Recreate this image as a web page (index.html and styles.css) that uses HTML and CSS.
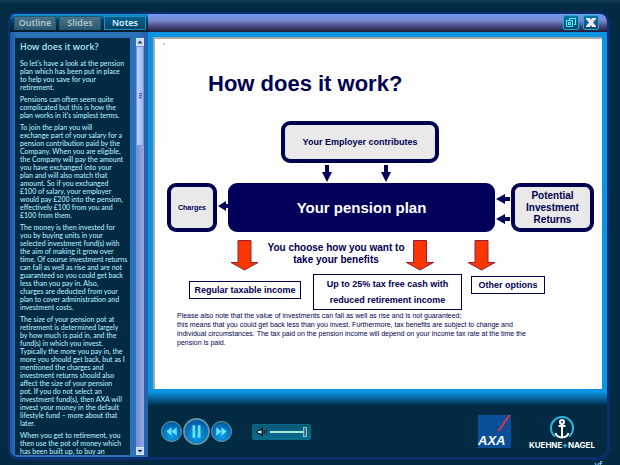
FILE: index.html
```html
<!DOCTYPE html>
<html lang="en">
<head>
<meta charset="utf-8">
<title>How does it work?</title>
<link rel="stylesheet" href="styles.css">
</head>
<body>
<main class="window">
  <header class="topbar">
    <nav class="tabs">
      <button class="tab" type="button">Outline</button>
      <button class="tab" type="button">Slides</button>
      <button class="tab tab-active" type="button">Notes</button>
    </nav>
    <div class="window-actions">
      <button class="action" type="button" aria-label="Restore window">
        <svg viewBox="0 0 14 13"><path d="M5.500 4v-1.500h6v6h-1.500M2.500 4.500h6v6h-6z"/><rect x="4.500" y="6.500" width="2" height="2"/></svg>
      </button>
      <button class="action" type="button" aria-label="Close">
        <svg viewBox="0 0 14 13"><path class="close-mark" d="M2 2h4l1 2 1-2h4v1L9 6.500l3 3.500v1H8L7 9l-1 2H2v-1l3-3.500L2 3z"/></svg>
      </button>
    </div>
  </header>
  <div class="workspace">
    <aside class="sidebar">
      <article class="notes">
        <h2>How does it work?</h2>
        <p>So let's have a look at the pension<br>plan which has been put in place<br>to help you save for your<br>retirement.</p>
        <p>Pensions can often seem quite<br>complicated but this is how the<br>plan works in it's simplest terms.</p>
        <p>To join the plan you will<br>exchange part of your salary for a<br>pension contribution paid by the<br>Company. When you are eligible,<br>the Company will pay the amount<br>you have exchanged into your<br>plan and will also match that<br>amount. So if you exchanged<br>£100 of salary, your employer<br>would pay £200 into the pension,<br>effectively £100 from you and<br>£100 from them.</p>
        <p>The money is then invested for<br>you by buying units in your<br>selected investment fund(s) with<br>the aim of making it grow over<br>time. Of course investment returns<br>can fall as well as rise and are not<br>guaranteed so you could get back<br>less than you pay in. Also,<br>charges are deducted from your<br>plan to cover administration and<br>investment costs.</p>
        <p>The size of your pension pot at<br>retirement is determined largely<br>by how much is paid in, and the<br>fund(s) in which you invest.<br>Typically the more you pay in, the<br>more you should get back, but as I<br>mentioned the charges and<br>investment returns should also<br>affect the size of your pension<br>pot. If you do not select an<br>investment fund(s), then AXA will<br>invest your money in the default<br>lifestyle fund – more about that<br>later.</p>
        <p>When you get to retirement, you<br>then use the pot of money which<br>has been built up, to buy an</p>
      </article>
      <div class="scrollbar">
        <button class="scroll-button" type="button" aria-label="Scroll up"><svg viewBox="0 0 8 8"><path d="M1 5.500l3-3 3 3z"/></svg></button>
        <div class="scroll-track"><div class="scroll-thumb"><span class="grip"></span></div></div>
        <button class="scroll-button" type="button" aria-label="Scroll down"><svg viewBox="0 0 8 8"><path d="M1 2.500l3 3 3-3z"/></svg></button>
      </div>
    </aside>
    <section class="stage">
      <div class="slide-frame">
        <div class="slide">
          <svg class="arrows" viewBox="0 0 446 240">
            <circle cx="9" cy="5" r="1" fill="#bbb"/>
            <g class="navy">
              <path d="M170 126h4v7h3l-5 10-5-10h3z"/>
              <path d="M229 126h4v7h3l-5 10-5-10h3z"/>
              <path d="M63 167l8-5v3h4v4h-4v3z"/>
              <path d="M341 160l9-5v3h5v4h-5v3z"/>
              <path d="M341 180l9-5v3h5v4h-5v3z"/>
            </g>
            <g class="red">
              <path d="M83 201.500h13v22h7l-13.500 7.500-13.500-7.500h7z"/>
              <path d="M258.500 201.500h13v22h7l-13.500 7.500-13.500-7.500h7z"/>
              <path d="M320 201.500h13v22h7l-13.500 7.500-13.500-7.500h7z"/>
            </g>
          </svg>
          <h1 class="slide-title">How does it work?</h1>
          <div class="node employer">Your Employer contributes</div>
          <div class="node charges">Charges</div>
          <div class="node plan">Your pension plan</div>
          <div class="node returns">Potential<br>Investment<br>Returns</div>
          <div class="choose">You choose how you want to<br>take your benefits</div>
          <div class="option regular">Regular taxable income</div>
          <div class="option cash">Up to 25% tax free cash with<br>reduced retirement income</div>
          <div class="option other">Other options</div>
          <p class="disclaimer">Please also note that the value of investments can fall as well as rise and is not guaranteed;<br>this means that you could get back less than you invest. Furthermore, tax benefits are subject to change and<br>individual circumstances. The tax paid on the pension income will depend on your income tax rate at the time the<br>pension is paid.</p>
        </div>
      </div>
      <footer class="player">
        <div class="transport">
          <button class="round" type="button" aria-label="Previous"><svg viewBox="0 0 20 20"><path d="M10 5.500v9l-5.500-4.500zM15.500 5.500v9l-5.500-4.500z"/></svg></button>
          <button class="round round-big" type="button" aria-label="Pause"><svg viewBox="0 0 26 26"><path d="M8.500 6h3v14h-3zM14.500 6h3v14h-3z"/></svg></button>
          <button class="round" type="button" aria-label="Next"><svg viewBox="0 0 20 20"><path d="M4.500 5.500v9l5.500-4.500zM10 5.500v9l5.500-4.500z"/></svg></button>
        </div>
        <label class="volume">
          <svg viewBox="0 0 12 10"><path fill="#021c2c" d="M1 3h2l4-3v10l-4-3h-2z"/><path fill="#c9f4f2" d="M2 4h2l1.500-1v4l-1.500-1h-2z"/><path fill="none" stroke="#03344a" d="M8.500 3v4M10.500 2v6"/></svg>
          <input type="range" min="0" max="100" value="100" aria-label="Volume">
        </label>
        <div class="logos">
          <svg class="axa" viewBox="0 0 33 33" role="img" aria-label="AXA">
            <rect width="33" height="33" fill="#074f97"/>
            <path d="M30 0h3L22 16h-3z" fill="#b33a5c"/>
            <text x="0" y="30">AXA</text>
          </svg>
          <div class="kn">
            <svg viewBox="0 0 26 26" aria-hidden="true">
              <path class="ring" d="M6 21.500A11 11 0 1 1 20 21.500"/>
              <path class="anchor" d="M13 9v13M9.500 11h7M6.500 18c1 3 3.500 4.500 6.500 4.500s5.500-1.500 6.500-4.500"/>
              <circle class="anchor" cx="13" cy="7" r="2"/>
            </svg>
            <span class="kn-name">KUEHNE<b>+</b>NAGEL</span>
          </div>
        </div>
      </footer>
    </section>
  </div>
</main>
<div class="edge-label">vf</div>
</body>
</html>
```
FILE: styles.css
```css
* { box-sizing: border-box; }

body {
  margin: 0;
  height: 100vh;
  padding: 12px 10px 5px 8px;
  display: flex;
  flex-direction: column;
  overflow: hidden;
  position: relative;
  background: linear-gradient(#123c57 0, #022a43 4px);
  font-family: "Noto Sans", sans-serif;
}

button { padding: 0; border: 0; font: inherit; }
svg { display: block; }

.window {
  flex: 1;
  min-height: 0;
  display: flex;
  flex-direction: column;
  border: solid #0c2e70;
  border-width: 2px 3px 3px 2px;
  border-radius: 8px 10px 12px 10px;
  overflow: hidden;
  background: #022a43;
}

.topbar {
  flex: none;
  height: 18px;
  display: flex;
  justify-content: space-between;
  background: linear-gradient(#6e9cf0, #7a8ad2 35%, #4c4f88 65%, #1f1c37);
}

.tabs {
  display: flex;
  gap: 3px;
  padding: 2px 2px 2px 4px;
  background: linear-gradient(#0f9be6, #03466e 30%, #021a2b);
}

.tab {
  width: 42px;
  height: 14px;
  border: 1px solid #1d5c78;
  background: linear-gradient(#4b7288, #2d5a70);
  color: #a9c4d0;
  font-size: 9px;
  font-weight: 600;
  line-height: 12px;
}

.tab-active {
  border-color: #1c8ec0;
  background: linear-gradient(#03618e, #08456a);
  color: #d8f4fc;
}

.window-actions {
  display: flex;
  gap: 4px;
  padding: 1px 8px;
}

.action {
  width: 16px;
  height: 15px;
  border: 1px solid #2aa5cc;
  border-radius: 2px;
  background: linear-gradient(#0578a5, #034a74);
}

.action svg { width: 14px; height: 13px; fill: none; stroke: #6fecf2; }
.action .close-mark { fill: #f4e8f8; stroke: none; }

.workspace { flex: 1; min-height: 0; display: flex; }

.sidebar {
  flex: none;
  width: 138px;
  display: flex;
  padding: 6px 4px 2px 5px;
  gap: 6px;
  background: linear-gradient(90deg, #1c58a4, #2a70ba 6px, #2a70ba 126px, #2660a8);
}

.notes {
  flex: 1;
  overflow: hidden;
  padding: 4px 0 0 5px;
  background: #022a43;
  color: #b4ecfa;
  font-family: Lato, sans-serif;
  font-size: 7px;
  font-weight: 500;
  line-height: 8px;
  white-space: nowrap;
}

.notes h2 {
  margin: 0 0 7px;
  font-family: "Noto Sans", sans-serif;
  font-size: 9px;
  font-weight: 500;
  line-height: 10px;
}

.notes p { margin: 0 0 4px; }

.scrollbar { width: 8px; display: flex; flex-direction: column; }

.scroll-button {
  flex: none;
  height: 8px;
  border: 1px solid #dce6fa;
  background: #c3d4f8;
}

.scroll-button svg { width: 6px; height: 6px; fill: #08142e; }
.scroll-track { flex: 1; background: linear-gradient(90deg, #6f8dd4, #93a9e4); }

.scroll-thumb {
  height: 25%;
  display: grid;
  place-items: center;
  border: 1px solid #7395dc;
  background: linear-gradient(90deg, #c0d2fa, #9ab8f4);
}

.grip {
  width: 3px;
  height: 6px;
  background: repeating-linear-gradient(#4d68b4 0 1px, #8ca8e4 1px 2px);
}

.stage { flex: 1; min-width: 0; display: flex; flex-direction: column; }

.slide-frame {
  flex: 1;
  min-height: 0;
  padding: 5px 5px 17px;
  background: linear-gradient(transparent calc(100% - 14px), #022a43), #0a94e2;
}

.slide {
  position: relative;
  height: 100%;
  border: solid #a5a7aa;
  border-width: 2px 0 0 2px;
  background: #fff;
  color: #000050;
  font-family: "Liberation Sans", sans-serif;
}

.arrows { position: absolute; left: 0; top: 0; width: 446px; height: 240px; }
.navy { fill: #000058; }
.red { fill: #f83800; stroke: #90203c; }

.slide-title {
  position: absolute;
  left: 53px;
  top: 32px;
  margin: 0;
  font-size: 22px;
  line-height: 26px;
}

.node {
  position: absolute;
  display: flex;
  align-items: center;
  justify-content: center;
  text-align: center;
  border: 4px solid #000050;
  border-radius: 9px;
  background: #e9e9e9;
  font-weight: bold;
  font-size: 9px;
  line-height: 12px;
  white-space: nowrap;
}

.employer { left: 126px; top: 82px; width: 158px; height: 42px; }
.charges { left: 12px; top: 144px; width: 50px; height: 49px; font-size: 7px; }
.plan { left: 73px; top: 144px; width: 267px; height: 49px; background: #00005a; border-color: #00005a; color: #fff; font-size: 15px; }
.returns { left: 356px; top: 144px; width: 83px; height: 49px; font-size: 10px; }

.choose {
  position: absolute;
  left: 112px;
  top: 203px;
  width: 138px;
  font-size: 10px;
  font-weight: bold;
  line-height: 12px;
  text-align: center;
  white-space: nowrap;
}

.option {
  position: absolute;
  border: 1px solid #000050;
  font-size: 9px;
  font-weight: bold;
  line-height: 16px;
  text-align: center;
  white-space: nowrap;
}

.regular { left: 34px; top: 242px; width: 112px; height: 18px; }
.cash { left: 158px; top: 235px; width: 149px; height: 36px; padding-top: 1px; }
.other { left: 316px; top: 237px; width: 74px; height: 18px; }

.disclaimer {
  position: absolute;
  left: 22px;
  top: 272px;
  margin: 0;
  font-size: 7px;
  line-height: 9px;
  white-space: nowrap;
}

.player {
  flex: none;
  height: 51px;
  display: flex;
  align-items: center;
  padding: 0 12px 0 13px;
}

.transport { display: flex; align-items: center; gap: 1px; }

.round {
  width: 21px;
  height: 21px;
  border: 1px solid #6fa4b4;
  border-radius: 50%;
  background: radial-gradient(circle at 50% 70%, #0aa0ec, #046cb4 60%, #034478);
}

.round-big { width: 27px; height: 27px; border-width: 2px; border-color: #5b93a4; }
.round svg { width: 100%; height: 100%; fill: #6fe0fa; }

.volume {
  display: flex;
  align-items: center;
  gap: 2px;
  width: 59px;
  height: 16px;
  margin-left: 20px;
  padding: 0 3px;
  border: 1px solid #0d6a86;
  border-radius: 2px;
  background: linear-gradient(#0b5878, #0a6c90);
}

.volume svg { flex: none; width: 12px; height: 10px; }

.volume input {
  appearance: none;
  flex: 1;
  min-width: 0;
  height: 10px;
  margin: 0;
  background: linear-gradient(#a9e6dc, #a9e6dc) center / 100% 2px no-repeat;
}

.volume input::-webkit-slider-thumb {
  appearance: none;
  width: 4px;
  height: 10px;
  border: 1px solid #8fc4c4;
  background: #3d7480;
}

.logos { margin-left: auto; display: flex; align-items: center; gap: 18px; }
.axa { width: 33px; height: 33px; }
.axa text { fill: #fff; font: italic bold 13px "Liberation Sans", sans-serif; }
.kn { display: flex; flex-direction: column; align-items: center; }
.kn svg { width: 26px; height: 26px; fill: none; }
.ring { stroke: #2cb8e0; stroke-width: 2; }
.anchor { stroke: #fff; stroke-width: 2; }
.kn-name { color: #fff; font-family: Inter, sans-serif; font-size: 8px; font-weight: 700; line-height: 8px; }
.kn-name b { color: #2cb8e0; }

.edge-label {
  position: absolute;
  right: 18px;
  bottom: -6px;
  color: #7fd4ee;
  font-size: 8px;
  font-weight: 600;
  line-height: 12px;
}
```
